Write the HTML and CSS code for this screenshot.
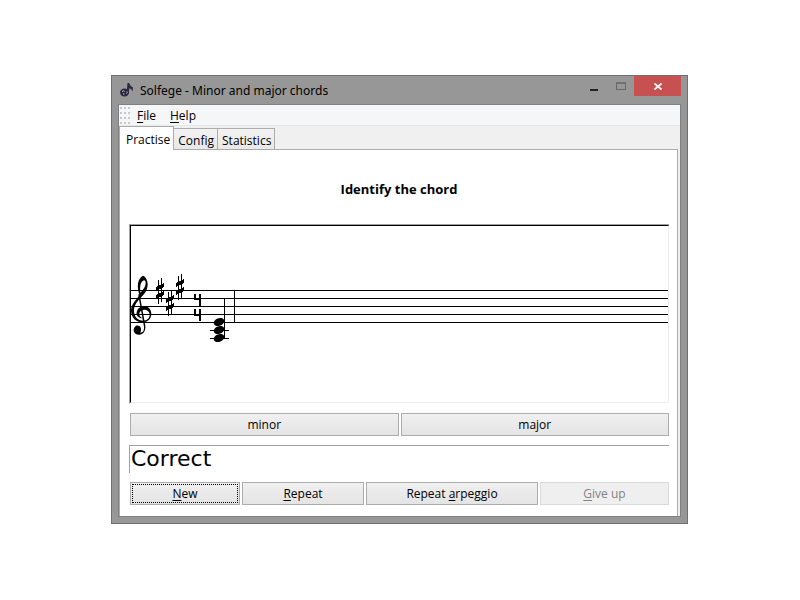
FILE: index.html
```html
<!DOCTYPE html>
<html lang="en">
<head>
  <meta charset="UTF-8">
  <meta name="viewport" content="width=device-width, initial-scale=1.0">
  <title>Solfege - Minor and major chords</title>
  <link rel="stylesheet" href="styles.css">
</head>
<body>
  <div class="window">
    <header class="titlebar">
      <svg class="app-icon" width="14" height="16" viewBox="0 0 14 16">
        <ellipse cx="4.5" cy="10.5" rx="4.5" ry="4" fill="#2c2840"/>
        <path d="M6.500 12 7.500 1 H9 Q10 4 13 5.500 L12.500 9.500 Q11.500 6.500 9.500 6 L8.500 12Z" fill="#2c2840"/>
        <path d="M2 9.500 Q4 8 4.500 9.500 M3 12 H4.500 M6.500 11.500 Q7.500 11 7 9.500" fill="none" stroke="#c4c2d8" stroke-width="1"/>
      </svg>
      <h1>Solfege - Minor and major chords</h1>
      <div class="controls">
        <button type="button" aria-label="Minimize">
          <svg width="8" height="2"><rect width="8" height="2" fill="#222"/></svg>
        </button>
        <button type="button" aria-label="Maximize">
          <svg width="10" height="8"><path d="M.5 1 H9.500 V7.500 H.5Z M0 1 H10" fill="none" stroke="#666"/></svg>
        </button>
        <button type="button" class="close" aria-label="Close">
          <svg width="8" height="7"><path d="M.5 .5 7.500 6.500 M7.500 .5 .5 6.500" stroke="#fff" stroke-width="1.800"/></svg>
        </button>
      </div>
    </header>

    <main class="client">
      <nav class="menubar">
        <svg class="grip" width="10" height="18" fill="#c8c8c8">
          <path d="M0 1h2v2h-2zM4 1h2v2h-2zM8 1h2v2h-2zM0 6h2v2h-2zM4 6h2v2h-2zM8 6h2v2h-2zM0 11h2v2h-2zM4 11h2v2h-2zM8 11h2v2h-2zM0 16h2v2h-2zM4 16h2v2h-2zM8 16h2v2h-2z"/>
        </svg>
        <button type="button"><u>F</u>ile</button>
        <button type="button"><u>H</u>elp</button>
      </nav>

      <div class="tabs" role="tablist">
        <button type="button" role="tab" class="tab active" aria-selected="true">Practise</button>
        <button type="button" role="tab" class="tab" aria-selected="false">Config</button>
        <button type="button" role="tab" class="tab" aria-selected="false">Statistics</button>
      </div>

      <section class="page">
        <h2>Identify the chord</h2>

        <div class="score">
          <svg width="100%" height="176" role="img" aria-label="A major chord on a staff">
            <!-- staff -->
            <g fill="#000" shape-rendering="crispEdges">
              <rect y="64" width="100%" height="1"/>
              <rect y="72" width="100%" height="1"/>
              <rect y="80" width="100%" height="1"/>
              <rect y="88" width="100%" height="1"/>
              <rect y="96" width="100%" height="1"/>
              <rect x="103" y="64" width="1" height="33"/>
            </g>
            <!-- treble clef -->
            <g transform="translate(-6 39) scale(.3333)">
              <path fill-rule="evenodd" d="M54 32 C64 36 68 48 68 60 C67 80 54 91 43 103 C34 113 27 123 27 139 C28 157 39 167 55 167 C68 166 74 159 74 150 C74 139 66 134 57 134 C47 135 42 141 43 149 C44 154 49 158 53 160 C40 161 33 151 35 142 C37 130 47 123 58 123 C71 124 79 134 79 147 C78 163 68 171 53 172 C33 172 19 158 18 137 C19 119 31 106 44 91 C38 75 36 58 42 45 C45 39 49 34 54 32Z M57 46 C48 49 44 60 46 83 C56 73 62 64 62 54 C62 48 60 46 57 46Z"/>
              <path d="M43 83 L60 176 C64 194 58 206 44 209 C24 210 21 190 33 182 C46 179 52 191 46 203 C56 203 59 193 56 180 L40 91Z"/>
            </g>
            <!-- key signature -->
            <g shape-rendering="crispEdges">
              <path d="M27 54h1v24h-1zM30 52h1v24h-1zM25 61l8-4v4l-8 4zM25 69l8-4v4l-8 4z"/>
              <path d="M37 66h1v24h-1zM40 64h1v24h-1zM35 73l8-4v4l-8 4zM35 81l8-4v4l-8 4z"/>
              <path d="M47 50h1v24h-1zM50 48h1v24h-1zM45 57l8-4v4l-8 4zM45 65l8-4v4l-8 4z"/>
            </g>
            <!-- time signature -->
            <path shape-rendering="crispEdges" d="M63 68h2v4h3v-4h2v12h-2v-6h-5zM63 83h2v5h3v-5h2v12h-2v-5h-5z"/>
            <!-- chord -->
            <g shape-rendering="crispEdges">
              <rect x="93" y="72" width="1" height="40"/>
              <rect x="79" y="104" width="19" height="1"/>
              <rect x="79" y="112" width="19" height="1"/>
            </g>
            <ellipse cx="88" cy="96" rx="5.500" ry="3.800" transform="rotate(-22 88 96)"/>
            <ellipse cx="88" cy="104" rx="5.500" ry="3.800" transform="rotate(-22 88 104)"/>
            <ellipse cx="88" cy="112" rx="5.500" ry="3.800" transform="rotate(-22 88 112)"/>
          </svg>
        </div>

        <div class="answers">
          <button type="button" class="btn">minor</button>
          <button type="button" class="btn">major</button>
        </div>

        <output class="result">Correct</output>

        <div class="actions">
          <button type="button" class="btn focused"><span><u>N</u>ew</span></button>
          <button type="button" class="btn"><span><u>R</u>epeat</span></button>
          <button type="button" class="btn"><span>Repeat <u>a</u>rpeggio</span></button>
          <button type="button" class="btn" disabled><span><u>G</u>ive up</span></button>
        </div>
      </section>
    </main>
  </div>
</body>
</html>
```
FILE: styles.css
```css
* {
  box-sizing: border-box;
}
body {
  margin: 0;
  padding: 75px 112px 76px 111px;
  background: #fff;
  color: #000;
  font: 12px/16px "Open Sans", "Noto Sans", sans-serif;
}
button {
  margin: 0;
  padding: 0;
  border: none;
  background: none;
  color: inherit;
  font: inherit;
}
svg {
  display: block;
}

.window {
  padding: 0 6px 6px;
  border: 1px solid #707070;
  background: #979797;
}
.titlebar {
  display: flex;
  align-items: center;
  height: 28px;
  padding-left: 2px;
}
.titlebar h1 {
  flex: 1;
  margin: 0 0 0 6px;
  padding-top: 1px;
  font: 12px/17px "Noto Sans", sans-serif;
}
.controls {
  display: flex;
  align-self: flex-start;
}
.controls button {
  display: flex;
  align-items: center;
  justify-content: center;
  width: 27px;
  height: 20px;
}
.controls button:first-child {
  align-items: flex-end;
  padding-bottom: 5px;
}
.controls .close {
  width: 47px;
  background: #c75050;
}

.client {
  border: 1px solid #808080;
  background: #f0f0f0;
}
.menubar {
  display: flex;
  align-items: center;
  gap: 14px;
  height: 21px;
  padding-left: 1px;
  border-bottom: 1px solid #e8e8e8;
  background: #f5f6f7;
}
.menubar button {
  padding-top: 2px;
}
.grip {
  margin-right: -7px;
}
.tabs {
  display: flex;
  align-items: flex-end;
  height: 23px;
}
.tab {
  height: 21px;
  padding: 3px 3px 0 4px;
  border: 1px solid #acacac;
  border-left: none;
  border-bottom: none;
  background: linear-gradient(#f2f2f2, #e8e8e8);
}
.tab.active {
  position: relative;
  height: 24px;
  margin-bottom: -1px;
  padding: 2px 3px 0 6px;
  border-left: 1px solid #acacac;
  background: #fff;
}

.page {
  margin-right: 2px;
  padding: 31px 8px 11px 9px;
  border: 1px solid #acacac;
  border-bottom: none;
  background: #fff;
}
.page h2 {
  margin: 0 0 27px;
  text-align: center;
  font-size: 13px;
  line-height: 16px;
}
.score {
  border: 1px solid #a0a0a0;
  border-right: none;
  border-bottom-color: #fff;
}
.score svg {
  box-sizing: content-box;
  border: 1px solid #000;
  border-right-color: #ececec;
  border-bottom-color: #ececec;
  width: calc(100% - 2px);
}
.btn {
  height: 23px;
  border: 1px solid #acacac;
  background: linear-gradient(#f0f0f0, #e4e4e4);
}
.btn:disabled {
  border-color: #d9d9d9;
  background: #efefef;
  color: #838383;
}
.btn.focused {
  outline: 1px dotted #000;
  outline-offset: -3px;
}
u {
  text-underline-offset: 2px;
}
.answers,
.actions {
  display: grid;
  gap: 2px;
  padding-left: 1px;
}
.answers {
  grid-template-columns: 1fr 1fr;
  margin-top: 9px;
}
.result {
  display: block;
  height: 28px;
  margin: 9px 0;
  padding-left: 1px;
  border-top: 1px solid #a0a0a0;
  border-left: 1px solid #a0a0a0;
  font: 22px/26px "DejaVu Sans", sans-serif;
}
.actions {
  grid-template-columns: 110fr 122fr 172fr 129fr;
}
```
